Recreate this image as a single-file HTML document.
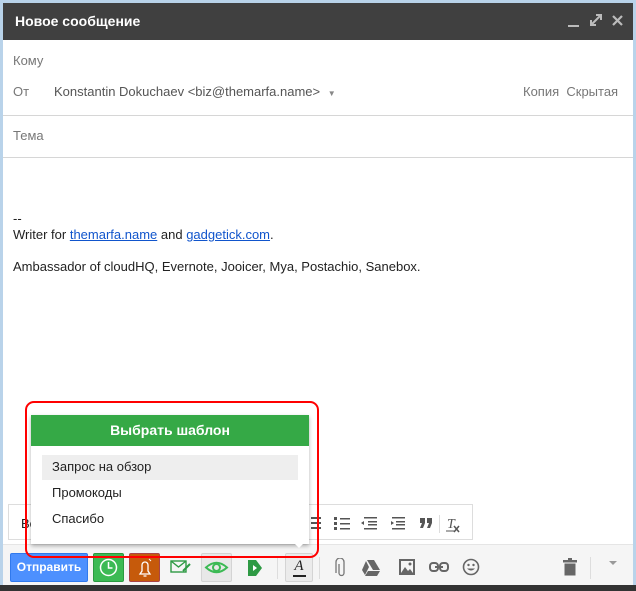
<!DOCTYPE html>
<html><head><meta charset="utf-8"><style>
*{box-sizing:border-box;margin:0;padding:0}
body{width:636px;height:591px;background:#b9d3ea;font-family:"Liberation Sans",Arial,sans-serif;font-size:13px;color:#222;position:relative;overflow:hidden}
.win{position:absolute;left:3px;top:3px;width:630px;height:588px;background:#fff}
.hdr{position:absolute;left:0;top:0;width:630px;height:37px;background:#404040;color:#fff;font-size:14px;font-weight:bold;padding:10px 0 0 12px}
.abs{position:absolute}
.lbl{color:#777;font-size:13px}
.sep{position:absolute;left:0;width:630px;height:1px;background:#d6d6d6}
a{color:#1155cc;text-decoration:underline}
.bar{position:absolute;left:0;top:541px;width:630px;height:44px;background:#f5f5f5;border-top:1px solid #e5e5e5}
.bot{position:absolute;left:0;top:585px;width:636px;height:6px;background:#333}
.btn{position:absolute;top:8px;height:29px;border-radius:2px}
.fmt{position:absolute;left:5px;top:501px;width:465px;height:36px;border:1px solid #ddd;background:#fff}
</style></head><body>
<div class="win">
 <div class="hdr">Новое сообщение
  <div class="abs" style="left:565px;top:22px;width:11px;height:2px;background:#bbb"></div>
  <svg class="abs" style="left:587px;top:11px" width="12" height="12"><path d="M1 11L11 1M6 1H11V6M1 6V11H6" stroke="#bbb" stroke-width="2" fill="none"/></svg>
  <svg class="abs" style="left:609px;top:12px" width="11" height="11"><path d="M1 1L10 10M10 1L1 10" stroke="#bbb" stroke-width="2.2"/></svg>
 </div>
 <div class="abs lbl" style="left:10px;top:50px">Кому</div>
 <div class="abs lbl" style="left:10px;top:81px">От</div>
 <div class="abs" style="left:51px;top:81px;color:#555">Konstantin Dokuchaev &lt;biz@themarfa.name&gt; <span style="font-size:8px;color:#888;margin-left:4px">▼</span></div>
 <div class="abs lbl" style="left:520px;top:81px">Копия&nbsp; Скрытая</div>
 <div class="sep" style="top:112px"></div>
 <div class="abs lbl" style="left:10px;top:125px">Тема</div>
 <div class="sep" style="top:154px"></div>
 <div class="abs" style="left:10px;top:208px;line-height:16px">--<br>Writer for <a>themarfa.name</a> and <a>gadgetick.com</a>.</div>
 <div class="abs" style="left:10px;top:256px">Ambassador of cloudHQ, Evernote, Jooicer, Mya, Postachio, Sanebox.</div>

 <div class="fmt">
  <span class="abs" style="left:12px;top:11px">Be</span>
  <svg class="abs" style="left:297px;top:10px" width="160" height="18" fill="#555">
   <rect x="0" y="2" width="3" height="2"/><rect x="5" y="2" width="10" height="2"/><rect x="5" y="7" width="10" height="2"/><rect x="5" y="12" width="10" height="2"/>
   <rect x="28" y="2" width="3" height="3"/><rect x="28" y="7" width="3" height="3"/><rect x="28" y="12" width="3" height="3"/><rect x="34" y="3" width="10" height="1.5"/><rect x="34" y="8" width="10" height="1.5"/><rect x="34" y="13" width="10" height="1.5"/>
   <rect x="58" y="2" width="13" height="1.5"/><rect x="62" y="6" width="9" height="1.5"/><rect x="62" y="9" width="9" height="1.5"/><rect x="58" y="13" width="13" height="1.5"/><path d="M58 6L55 8L58 10Z"/>
   <rect x="86" y="2" width="13" height="1.5"/><rect x="90" y="6" width="9" height="1.5"/><rect x="90" y="9" width="9" height="1.5"/><rect x="86" y="13" width="13" height="1.5"/><path d="M85 6L88 8L85 10Z"/>
   <path d="M114 3h5v5l-2 5h-3l2-5h-2zM121 3h5v5l-2 5h-3l2-5h-2z"/>
   <rect x="133" y="0" width="1" height="18" fill="#ddd"/>
   <text x="141" y="13" font-size="14" font-style="italic" font-family="Liberation Serif">T</text><path d="M140 16h8" stroke="#555"/><path d="M148 11l5 6M153 11l-5 6" stroke="#555" stroke-width="1.5"/>
  </svg>
 </div>

 <div class="bar">
  <div class="btn" style="left:7px;width:78px;background:#4d90fe;border:1px solid #3079ed;color:#fff;font-weight:bold;font-size:12px;text-align:center;line-height:27px">Отправить</div>
  <div class="btn" style="left:90px;width:31px;background:#3cba54;border:1px solid #2a9a40"><svg width="29" height="27"><circle cx="14.5" cy="13.5" r="8" stroke="#fff" stroke-width="1.5" fill="none"/><path d="M14.5 8v6h4" stroke="#fff" stroke-width="1.5" fill="none"/></svg></div>
  <div class="btn" style="left:126px;width:31px;background:#c65a0b;border:1px solid #a44"><svg width="29" height="27"><path d="M10 20h10l-2-3v-6a3 3 0 0 0-6 0v6z M13.5 22h3" stroke="#fff" stroke-width="1.3" fill="none"/><path d="M19 5l2 2" stroke="#fff"/></svg></div>
  <svg class="abs" style="left:167px;top:14px" width="22" height="16"><rect x="1" y="2" width="15" height="11" stroke="#2e9a44" stroke-width="1.4" fill="none"/><path d="M1 2l7.5 6 7.5-6" stroke="#2e9a44" stroke-width="1.4" fill="none"/><path d="M13 12l7-7" stroke="#2e9a44" stroke-width="2"/></svg>
  <div class="btn" style="left:198px;width:31px;background:#e8e8e8;border:1px solid #d4d4d4"><svg width="29" height="27"><path d="M4 13.5Q14.5 4 25 13.5Q14.5 23 4 13.5Z" stroke="#3cba54" stroke-width="2" fill="none"/><circle cx="14.5" cy="13.5" r="3.5" stroke="#3cba54" stroke-width="2" fill="none"/></svg></div>
  <svg class="abs" style="left:243px;top:14px" width="18" height="18"><path d="M2 1h8l6 8-6 8H2z" fill="#2e9a44"/><path d="M7 6l4 3-4 3z" fill="#fff"/></svg>
  <div class="abs" style="left:274px;top:12px;width:1px;height:22px;background:#ddd"></div>
  <div class="btn" style="left:282px;width:28px;background:#ebebeb;border:1px solid #d4d4d4;text-align:center;font-family:'Liberation Serif',serif;font-style:italic;font-size:15px;line-height:24px">A<div style="position:absolute;left:7px;top:21px;width:13px;height:1.5px;background:#222"></div></div>
  <div class="abs" style="left:316px;top:12px;width:1px;height:22px;background:#ddd"></div>
  <svg class="abs" style="left:332px;top:13px" width="12" height="20"><path d="M4 6v9a2.5 2.5 0 0 0 5 0V4a4 4 0 0 0-8 0v11" stroke="#777" stroke-width="1.3" fill="none"/></svg>
  <svg class="abs" style="left:358px;top:14px" width="20" height="18"><path d="M6 1h7l6 10h-7z" fill="#666"/><path d="M5 2l-4 9 3 5 4-8z" fill="#666"/><path d="M7 12h12l-3 5H4z" fill="#666"/></svg>
  <svg class="abs" style="left:395px;top:13px" width="18" height="18"><rect x="1" y="1" width="16" height="16" fill="#666"/><rect x="3" y="3" width="12" height="12" fill="#f5f5f5"/><path d="M3 15l4-6 3 4 2-2 3 4z" fill="#666"/><circle cx="12" cy="6" r="1.5" fill="#666"/></svg>
  <svg class="abs" style="left:426px;top:17px" width="20" height="10"><rect x="1" y="1" width="8" height="8" rx="3" stroke="#666" stroke-width="2" fill="none"/><rect x="11" y="1" width="8" height="8" rx="3" stroke="#666" stroke-width="2" fill="none"/><path d="M6 5h8" stroke="#666" stroke-width="2"/></svg>
  <svg class="abs" style="left:459px;top:13px" width="18" height="18"><circle cx="9" cy="9" r="7.5" stroke="#666" stroke-width="1.6" fill="none"/><circle cx="6.5" cy="7" r="1.2" fill="#666"/><circle cx="11.5" cy="7" r="1.2" fill="#666"/><path d="M5 10.5q4 4 8 0z" fill="#666"/></svg>
  <svg class="abs" style="left:560px;top:13px" width="14" height="18"><rect x="0" y="2" width="14" height="2.5" fill="#666"/><rect x="5" y="0" width="4" height="3" fill="#666"/><rect x="1.5" y="5.5" width="11" height="12" fill="#666"/></svg>
  <div class="abs" style="left:587px;top:12px;width:1px;height:22px;background:#ddd"></div>
  <div class="abs" style="left:606px;top:16px;width:0;height:0;border-left:4px solid transparent;border-right:4px solid transparent;border-top:4px solid #999"></div>
 </div>
</div>
<div class="bot"></div>

<!-- popup -->
<div class="abs" style="left:31px;top:415px;width:278px;height:129px;background:#fff;box-shadow:0 2px 4px rgba(0,0,0,.3)">
 <div style="height:31px;background:#35a946;color:#fff;font-weight:bold;font-size:14px;text-align:center;line-height:31px">Выбрать шаблон</div>
 <div class="abs" style="left:11px;top:40px;width:256px;height:25px;background:#eee"></div>
 <div class="abs" style="left:21px;top:44px">Запрос на обзор</div>
 <div class="abs" style="left:21px;top:70px">Промокоды</div>
 <div class="abs" style="left:21px;top:96px">Спасибо</div>
</div>
<div class="abs" style="left:294px;top:543px;width:0;height:0;border-left:5px solid transparent;border-right:5px solid transparent;border-top:5px solid #fff"></div>
<div class="abs" style="left:25px;top:401px;width:294px;height:157px;border:2px solid #f00;border-radius:9px"></div>
</body></html>
